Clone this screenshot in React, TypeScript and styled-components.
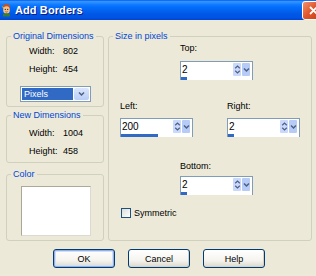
import styled, { createGlobalStyle } from 'styled-components';

const GlobalStyle = createGlobalStyle`
	html, body {
		margin: 0;
		padding: 0;
		background: #ece9d8;
	}
	body {
		font-family: 'Liberation Sans', Arial, sans-serif;
		font-size: 9px;
		color: #000;
	}
`;

const Window = styled.div`
	width: 316px;
	height: 276px;
	overflow: hidden;
	display: flex;
	flex-direction: column;
	background: #ece9d8;
`;

const TitleBar = styled.div`
	height: 20px;
	flex-shrink: 0;
	display: flex;
	align-items: center;
	gap: 3px;
	padding-left: 1px;
	background: linear-gradient(
		to bottom,
		#0058ee 0%,
		#3593ff 7%,
		#288eff 13%,
		#127dff 22%,
		#036ffc 35%,
		#0262ee 55%,
		#0057e5 72%,
		#0054e3 88%,
		#0043cf 100%
	);
`;

const Title = styled.span`
	flex: 1;
	color: #fff;
	font-family: 'Liberation Sans', Arial, sans-serif;
	font-weight: bold;
	font-size: 11px;
	letter-spacing: 0.1px;
	text-shadow: 1px 1px 0 #0a1883;
`;

const CloseButton = styled.div`
	width: 21px;
	height: 17px;
	margin-right: -9px;
	border: 1px solid #fff;
	border-radius: 3px;
	background: linear-gradient(135deg, #f0916b 0%, #e0552b 45%, #c63d12 100%);
	display: flex;
	align-items: center;
	justify-content: center;
`;

const Body = styled.div`
	padding: 11px 4px 0 6px;
	display: flex;
	flex-direction: column;
`;

const MainRow = styled.div`
	display: flex;
	gap: 4px;
	align-items: stretch;
`;

const LeftColumn = styled.div`
	width: 98px;
	display: flex;
	flex-direction: column;
`;

const Group = styled.fieldset<{ $mt?: number }>`
	margin: ${(p) => p.$mt ?? 0}px 0 0 0;
	padding: 0;
	min-width: 0;
	border: 1px solid #d0d0bf;
	border-radius: 3px;
`;

const RightGroup = styled(Group)`
	flex: 1;
`;

const Legend = styled.legend`
	margin-left: 4px;
	padding: 0 2px;
	color: #0046d5;
	font-size: 9px;
	line-height: 11px;
`;

const GroupInner = styled.div<{ $pt: number; $pb: number }>`
	padding-top: ${(p) => p.$pt}px;
	padding-bottom: ${(p) => p.$pb}px;
`;

const DimRow = styled.div`
	display: grid;
	grid-template-columns: 34px auto;
	padding-left: 22px;
	height: 18px;
	align-items: center;
`;

const Dropdown = styled.div`
	margin: 8px 0 0 13px;
	width: 71px;
	height: 16px;
	box-sizing: border-box;
	border: 1px solid #7f9db9;
	background: #fff;
	display: flex;
	padding: 1px;
	gap: 1px;
`;

const DropdownValue = styled.span`
	flex: 1;
	background: #316ac5;
	color: #fff;
	padding-left: 2px;
	line-height: 12px;
	font-size: 9px;
`;

const DropdownButton = styled.span`
	width: 15px;
	border-radius: 2px;
	background: linear-gradient(to bottom, #dbe6fd, #b9cdf7);
	display: flex;
	align-items: center;
	justify-content: center;
`;

const ColorSwatch = styled.div`
	margin: 6px 0 0 14px;
	width: 70px;
	height: 50px;
	box-sizing: border-box;
	background: #fff;
	border: 1px solid #aca899;
	border-right-color: #dcdad0;
	border-bottom-color: #dcdad0;
`;

const FieldRow = styled.div<{ $mt: number; $pl: number }>`
	margin-top: ${(p) => p.$mt}px;
	padding-left: ${(p) => p.$pl}px;
	display: flex;
	gap: 34px;
`;

const Field = styled.div<{ $gap: number }>`
	display: flex;
	flex-direction: column;
	gap: ${(p) => p.$gap}px;
`;

const FieldLabel = styled.span`
	font-size: 9px;
	line-height: 11px;
`;

const Spin = styled.div`
	width: 73px;
	height: 19px;
	box-sizing: border-box;
	border: 1px solid #7f9db9;
	background: #fff;
	display: flex;
	flex-direction: column;
`;

const SpinTop = styled.div`
	height: 14px;
	display: flex;
	align-items: stretch;
	padding-right: 2px;
	padding-top: 1px;
`;

const SpinText = styled.span`
	flex: 1;
	padding-left: 1px;
	font-size: 10px;
	line-height: 13px;
`;

const SpinBtn = styled.span<{ $tone: string }>`
	width: 8px;
	margin-left: 1px;
	border-radius: 1px;
	background: ${(p) => p.$tone};
	display: flex;
	align-items: center;
	justify-content: center;
`;

const SpinBar = styled.div`
	height: 3px;
	margin-top: 1px;
	background: #fff;
`;

const SpinFill = styled.div`
	height: 3px;
	background: #316ac5;
`;

const CheckRow = styled.label`
	margin-top: 12px;
	padding-left: 12px;
	display: flex;
	align-items: center;
	gap: 3px;
	height: 12px;
`;

const CheckBox = styled.span`
	width: 10px;
	height: 10px;
	box-sizing: border-box;
	border: 1px solid #1c5180;
	background: linear-gradient(135deg, #dcdcd7, #fff);
`;

const ButtonRow = styled.div`
	margin-top: 8px;
	display: flex;
	justify-content: center;
	gap: 13px;
`;

const Button = styled.button<{ $default?: boolean }>`
	width: 62px;
	height: 19px;
	padding: 0;
	font-family: 'Liberation Sans', Arial, sans-serif;
	font-size: 9px;
	color: #000;
	border: 1px solid #003c74;
	border-radius: 3px;
	background: linear-gradient(to bottom, #ffffff 0%, #f5f4ef 60%, #dcd8cc 100%);
	box-shadow: ${(p) => (p.$default ? 'inset 0 0 0 1px #97aee2, inset 0 0 0 2px #cde0fb' : 'inset -1px -1px 0 #d6d0c5')};
`;

const Chevron = () => (
	<svg width='7' height='6' viewBox='0 0 7 6'>
		<path d='M1 1.5 L3.5 4 L6 1.5' fill='none' stroke='#4d6185' strokeWidth='1.5' />
	</svg>
);

const UpDown = () => (
	<svg width='7' height='11' viewBox='0 0 7 11'>
		<path d='M1.2 4.2 L3.5 2 L5.8 4.2' fill='none' stroke='#4d6185' strokeWidth='1.2' />
		<path d='M1.2 6.8 L3.5 9 L5.8 6.8' fill='none' stroke='#4d6185' strokeWidth='1.2' />
	</svg>
);

const AppIcon = () => (
	<svg width='11' height='14' viewBox='0 0 11 14'>
		<path d='M2 4 Q2 1 5.5 1 Q9 1 9 4 L9 6 L2 6 Z' fill='#c8501e' />
		<ellipse cx='5.5' cy='7' rx='3.3' ry='3.8' fill='#f4c08a' />
		<circle cx='4.3' cy='6.4' r='0.6' fill='#2a2a2a' />
		<circle cx='6.7' cy='6.4' r='0.6' fill='#2a2a2a' />
		<path d='M4.3 8.6 Q5.5 9.5 6.7 8.6' fill='none' stroke='#a03010' strokeWidth='0.7' />
		<path d='M2 11 Q5.5 9.5 9 11 L9 13.5 L2 13.5 Z' fill='#3a7d2c' />
		<path d='M1.3 3.5 L3 5.5' stroke='#e8d04a' strokeWidth='1' />
	</svg>
);

function SpinBox({ value }: { value: number }) {
	const fill = Math.round(6 + value * 0.155);
	return (
		<Spin>
			<SpinTop>
				<SpinText>{value}</SpinText>
				<SpinBtn $tone='#c9d8fb'>
					<UpDown />
				</SpinBtn>
				<SpinBtn $tone='#b7cbf7'>
					<Chevron />
				</SpinBtn>
			</SpinTop>
			<SpinBar>
				<SpinFill style={{ width: `${fill}px` }} />
			</SpinBar>
		</Spin>
	);
}

export default function App() {
	return (
		<>
			<GlobalStyle />
			<Window>
				<TitleBar>
					<AppIcon />
					<Title>Add Borders</Title>
					<CloseButton>
						<svg width='9' height='9' viewBox='0 0 9 9'>
							<path d='M1 1 L8 8 M8 1 L1 8' stroke='#fff' strokeWidth='1.8' />
						</svg>
					</CloseButton>
				</TitleBar>
				<Body>
					<MainRow>
						<LeftColumn>
							<Group>
								<Legend>Original Dimensions</Legend>
								<GroupInner $pt={0} $pb={4}>
									<DimRow>
										<span>Width:</span>
										<span>802</span>
									</DimRow>
									<DimRow>
										<span>Height:</span>
										<span>454</span>
									</DimRow>
									<Dropdown>
										<DropdownValue>Pixels</DropdownValue>
										<DropdownButton>
											<Chevron />
										</DropdownButton>
									</Dropdown>
								</GroupInner>
							</Group>
							<Group $mt={3}>
								<Legend>New Dimensions</Legend>
								<GroupInner $pt={3} $pb={2}>
									<DimRow>
										<span>Width:</span>
										<span>1004</span>
									</DimRow>
									<DimRow>
										<span>Height:</span>
										<span>458</span>
									</DimRow>
								</GroupInner>
							</Group>
							<Group $mt={6}>
								<Legend>Color</Legend>
								<GroupInner $pt={0} $pb={4}>
									<ColorSwatch />
								</GroupInner>
							</Group>
						</LeftColumn>
						<RightGroup>
							<Legend>Size in pixels</Legend>
							<FieldRow $mt={1} $pl={71}>
								<Field $gap={7}>
									<FieldLabel>Top:</FieldLabel>
									<SpinBox value={2} />
								</Field>
							</FieldRow>
							<FieldRow $mt={21} $pl={11}>
								<Field $gap={6}>
									<FieldLabel>Left:</FieldLabel>
									<SpinBox value={200} />
								</Field>
								<Field $gap={6}>
									<FieldLabel>Right:</FieldLabel>
									<SpinBox value={2} />
								</Field>
							</FieldRow>
							<FieldRow $mt={24} $pl={71}>
								<Field $gap={4}>
									<FieldLabel>Bottom:</FieldLabel>
									<SpinBox value={2} />
								</Field>
							</FieldRow>
							<CheckRow>
								<CheckBox />
								<span>Symmetric</span>
							</CheckRow>
						</RightGroup>
					</MainRow>
					<ButtonRow>
						<Button $default>OK</Button>
						<Button>Cancel</Button>
						<Button>Help</Button>
					</ButtonRow>
				</Body>
			</Window>
		</>
	);
}
